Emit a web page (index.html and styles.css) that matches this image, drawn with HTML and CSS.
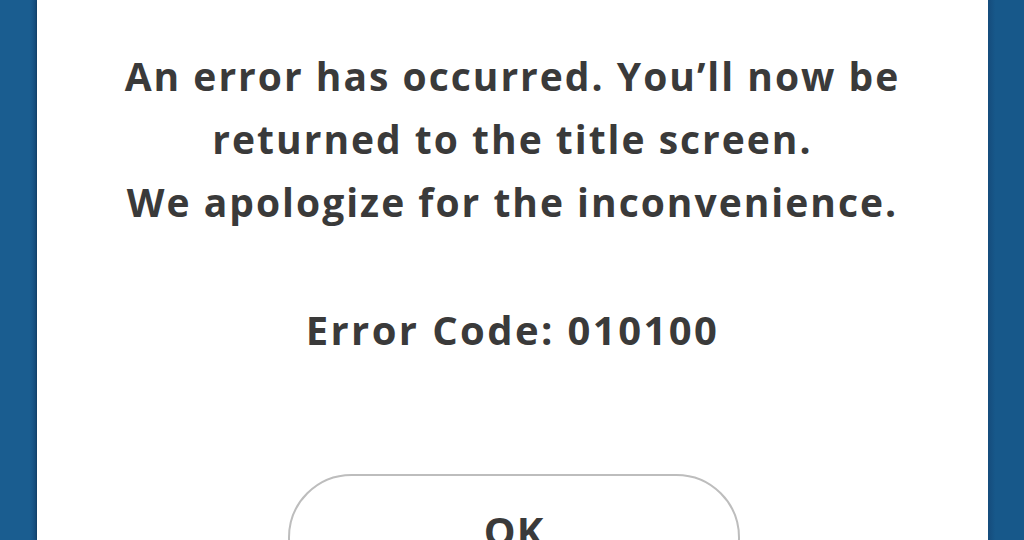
FILE: index.html
```html
<!DOCTYPE html>
<html lang="en">
<head>
  <meta charset="UTF-8" />
  <meta name="viewport" content="width=device-width, initial-scale=1" />
  <title>Error</title>
  <link rel="stylesheet" href="styles.css">
</head>
<body>
  <div class="screen">
    <div class="side"></div>
    <div class="panel">
      <p class="message">
        An error has occurred. You’ll now be<br>
        returned to the title screen.<br>
        We apologize for the inconvenience.
      </p>
      <p class="code">Error Code: 010100</p>
      <button class="ok-btn">OK</button>
    </div>
    <div class="side"></div>
  </div>
</body>
</html>
```

FILE: styles.css
```css
* {
  margin: 0;
  padding: 0;
  box-sizing: border-box;
}

body {
  width: 1024px;
  height: 540px;
  overflow: hidden;
  font-family: 'Open Sans', 'DejaVu Sans', sans-serif;
  background: #17588a;
}

.screen {
  display: flex;
  height: 540px;
}

.side {
  width: 37px;
  background: linear-gradient(90deg, #1a5d90 80%, #154a7a);
}

.side:last-child {
  width: 36px;
  background: linear-gradient(90deg, #154b7b, #17588a 20%);
}

.panel {
  flex: 1;
  background: #ffffff;
  display: flex;
  flex-direction: column;
  align-items: center;
  padding-top: 44px;
  color: #3a3a3a;
  text-align: center;
  box-shadow: 0 0 3px rgba(0, 0, 0, 0.35);
}

.message {
  font-size: 39px;
  font-weight: 700;
  line-height: 63px;
  letter-spacing: 2px;
}

.code {
  font-size: 40px;
  font-weight: 700;
  line-height: 63px;
  letter-spacing: 2.4px;
  margin-top: 65px;
}

.ok-btn {
  display: block;
  margin-top: 113px;
  margin-left: 3px;
  width: 452px;
  padding: 23px 0 37px;
  border: 2px solid #bdbdbd;
  border-radius: 64px;
  background: #ffffff;
  font-family: inherit;
  font-size: 40px;
  font-weight: 700;
  line-height: 63px;
  letter-spacing: 1px;
  color: #3a3a3a;
}
```
